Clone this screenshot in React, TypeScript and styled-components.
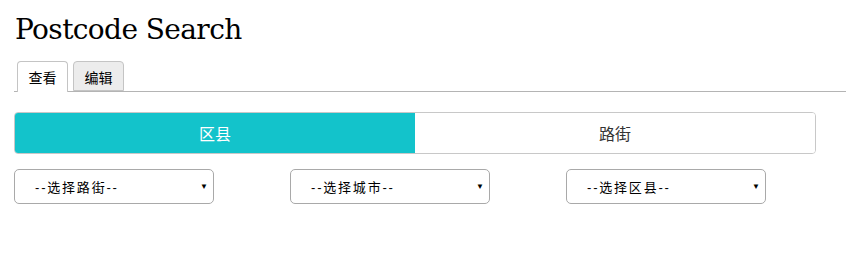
import { useState } from "react";
import styled, { createGlobalStyle } from "styled-components";

const GlobalStyle = createGlobalStyle`
  body {
    margin: 0;
    background: #fff;
    font-family: "Liberation Sans", "Noto Sans CJK SC", sans-serif;
    color: #000;
  }
`;

const tabs = ["查看", "编辑"];
const segments = ["区县", "路街"];
const selects = ["--选择路街--", "--选择城市--", "--选择区县--"];

function App() {
  const [tab, setTab] = useState(0);
  const [segment, setSegment] = useState(0);

  return (
    <Page>
      <GlobalStyle />
      <Title>Postcode Search</Title>
      <TabBar>
        {tabs.map((name, idx) => (
          <Tab key={idx} active={idx === tab} onClick={() => setTab(idx)}>
            {name}
          </Tab>
        ))}
      </TabBar>
      <Segments>
        {segments.map((name, idx) => (
          <Segment
            key={idx}
            active={idx === segment}
            onClick={() => setSegment(idx)}
          >
            {name}
          </Segment>
        ))}
      </Segments>
      <SelectRow>
        {selects.map((label, idx) => (
          <SelectCell key={idx}>
            <SelectBox>
              <SelectText>{label}</SelectText>
              <Arrow>▼</Arrow>
            </SelectBox>
          </SelectCell>
        ))}
      </SelectRow>
    </Page>
  );
}
export default App;

const Page = styled.div`
  padding: 12px 0 0 14px;
`;

const Title = styled.h1`
  margin: 0 0 0 1px;
  font-family: "DejaVu Serif", "Liberation Serif", serif;
  font-weight: normal;
  font-size: 28px;
  line-height: 36px;
  letter-spacing: -0.6px;
`;

const TabBar = styled.div`
  display: flex;
  gap: 5px;
  padding-left: 3px;
  margin-top: 13px;
  border-bottom: 1px solid #b4b4b4;
  height: 31px;
  box-sizing: border-box;
  align-items: flex-end;
`;

const Tab = styled.div<{ active?: boolean }>`
  width: 51px;
  height: ${(p) => (p.active ? "31px" : "30px")};
  box-sizing: border-box;
  border: 1px solid #c4c4c4;
  border-bottom: ${(p) => (p.active ? "none" : "1px solid #c4c4c4")};
  border-radius: 4px 4px 0 0;
  background: ${(p) => (p.active ? "#fff" : "#ececec")};
  margin-bottom: ${(p) => (p.active ? "-1px" : "0")};
  font-size: 14px;
  display: flex;
  justify-content: center;
  padding-top: 5px;
  cursor: pointer;
`;

const Segments = styled.div`
  display: flex;
  width: 802px;
  height: 42px;
  margin-top: 20px;
  border: 1px solid #c8c8c8;
  border-radius: 4px;
  box-sizing: border-box;
  overflow: hidden;
`;

const Segment = styled.div<{ active?: boolean }>`
  flex: 1;
  display: flex;
  align-items: center;
  justify-content: center;
  font-size: 16px;
  background: ${(p) => (p.active ? "#13c3cb" : "#fff")};
  color: ${(p) => (p.active ? "#fff" : "#333")};
  cursor: pointer;
`;

const SelectRow = styled.div`
  display: flex;
  margin-top: 15px;
`;

const SelectCell = styled.div`
  width: 276px;
`;

const SelectBox = styled.div`
  width: 200px;
  height: 35px;
  box-sizing: border-box;
  border: 1px solid #a9a9a9;
  border-radius: 5px;
  display: flex;
  align-items: center;
  justify-content: space-between;
  padding: 0 5px 0 20px;
  font-size: 13px;
  letter-spacing: 1.8px;
`;

const SelectText = styled.span``;

const Arrow = styled.span`
  font-size: 8px;
  letter-spacing: 0;
`;
